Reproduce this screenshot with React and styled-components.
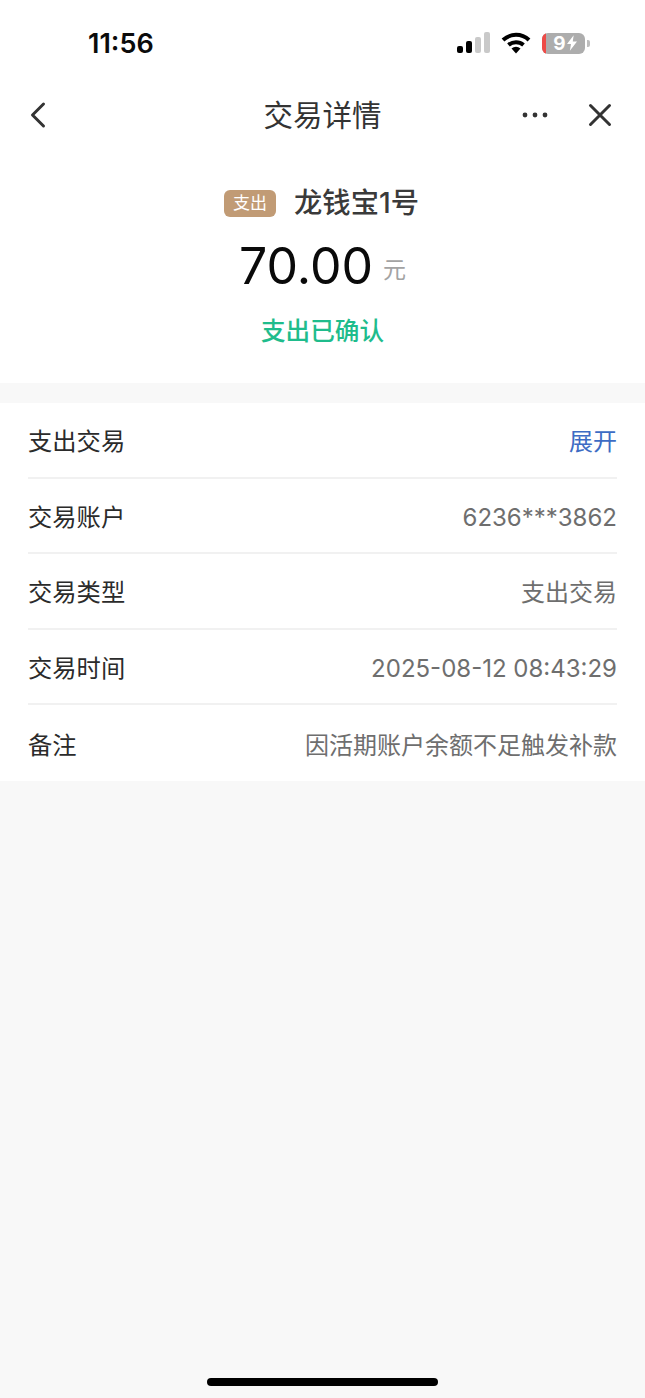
import styled, { createGlobalStyle } from "styled-components"

const GlobalStyle = createGlobalStyle`
    * {
        box-sizing: border-box;
    }
    body {
        margin: 0;
        background-color: #F8F8F8;
        font-family: "Inter", "Noto Sans CJK SC", sans-serif;
    }
`

const rows = [
    { label: "支出交易", value: "展开", link: true },
    { label: "交易账户", value: "6236***3862", digits: true },
    { label: "交易类型", value: "支出交易" },
    { label: "交易时间", value: "2025-08-12 08:43:29", digits: true },
    { label: "备注", value: "因活期账户余额不足触发补款" },
]

export default function App() {
    return (
        <Page>
            <GlobalStyle />
            <Header>
                <StatusBar>
                    <Clock>11:56</Clock>
                    <StatusIcons>
                        <svg width="33" height="22" viewBox="0 0 33 22">
                            <rect x="0" y="14" width="6" height="7" rx="2" fill="#000" />
                            <rect x="9" y="9" width="6" height="12" rx="2" fill="#000" />
                            <rect x="18" y="5" width="6" height="16" rx="2" fill="#C9C9C9" />
                            <rect x="27" y="0" width="6" height="21" rx="2" fill="#C9C9C9" />
                        </svg>
                        <svg width="30" height="22" viewBox="0 0 30 22">
                            <path d="M2 8 A19 19 0 0 1 28 8" fill="none" stroke="#000" strokeWidth="4" />
                            <path d="M7.5 13 A11.5 11.5 0 0 1 22.5 13" fill="none" stroke="#000" strokeWidth="4" />
                            <path d="M10.5 16.5 A7 7 0 0 1 19.5 16.5 L15 21.5 Z" fill="#000" />
                        </svg>
                        <Battery>
                            <BatteryBody>
                                <BatteryLevel />
                                <BatteryText>9</BatteryText>
                                <svg width="10" height="16" viewBox="0 0 9 14">
                                    <path d="M6 0 L0 8 H3.6 L2.6 14 L9 5.6 H5.2 Z" fill="#fff" />
                                </svg>
                            </BatteryBody>
                            <BatteryCap />
                        </Battery>
                    </StatusIcons>
                </StatusBar>
                <NavBar>
                    <svg width="20" height="28" viewBox="0 0 20 28">
                        <path d="M15.5 3 L4.5 14 L15.5 25" fill="none" stroke="#333" strokeWidth="3" strokeLinecap="round" strokeLinejoin="round" />
                    </svg>
                    <NavTitle>交易详情</NavTitle>
                    <NavActions>
                        <svg width="26" height="6" viewBox="0 0 26 6">
                            <circle cx="3" cy="3" r="2.4" fill="#333" />
                            <circle cx="13" cy="3" r="2.4" fill="#333" />
                            <circle cx="23" cy="3" r="2.4" fill="#333" />
                        </svg>
                        <svg width="24" height="24" viewBox="0 0 24 24">
                            <path d="M2.5 2.5 L21.5 21.5 M21.5 2.5 L2.5 21.5" fill="none" stroke="#333" strokeWidth="3" strokeLinecap="round" />
                        </svg>
                    </NavActions>
                </NavBar>
            </Header>

            <Summary>
                <ProductLine>
                    <Tag>支出</Tag>
                    <ProductName>龙钱宝1号</ProductName>
                </ProductLine>
                <AmountLine>
                    <Amount>70.00</Amount>
                    <Unit>元</Unit>
                </AmountLine>
                <Status>支出已确认</Status>
            </Summary>

            <DetailList>
                {rows.map((row) => (
                    <Row key={row.label}>
                        <Label>{row.label}</Label>
                        <Value $link={row.link} $digits={row.digits}>{row.value}</Value>
                    </Row>
                ))}
            </DetailList>

            <HomeIndicator />
        </Page>
    )
}

const Page = styled.div`
    position: relative;
    width: 645px;
    height: 1398px;
    overflow: hidden;
    background-color: #F8F8F8;
`
const Header = styled.div`
    background-color: #FFFFFF;
`
const StatusBar = styled.div`
    height: 78px;
    padding: 28px 55px 0 88px;
    display: flex;
    justify-content: space-between;
    align-items: flex-start;
`
const Clock = styled.div`
    font-size: 27px;
    line-height: 32px;
    font-weight: 600;
    color: #0B0B0B;
`
const StatusIcons = styled.div`
    display: flex;
    align-items: center;
    gap: 11px;
    height: 24px;
    margin-top: 3px;
`
const Battery = styled.div`
    display: flex;
    align-items: center;
    gap: 2px;
`
const BatteryBody = styled.div`
    position: relative;
    width: 43px;
    height: 21px;
    border-radius: 6px;
    overflow: hidden;
    background-color: #ADADAD;
    display: flex;
    align-items: center;
    justify-content: center;
    gap: 1px;
    padding-left: 3px;
`
const BatteryLevel = styled.div`
    position: absolute;
    left: 0;
    top: 0;
    bottom: 0;
    width: 4px;
    background-color: #EE4B47;
`
const BatteryText = styled.span`
    font-size: 19px;
    line-height: 21px;
    font-weight: 700;
    color: #FFFFFF;
`
const BatteryCap = styled.div`
    width: 3px;
    height: 7px;
    border-radius: 0 2px 2px 0;
    background-color: #BDBDBD;
`
const NavBar = styled.div`
    position: relative;
    height: 74px;
    padding: 0 33px 0 28px;
    display: flex;
    align-items: center;
    justify-content: space-between;
`
const NavTitle = styled.div`
    position: absolute;
    left: 0;
    right: 0;
    text-align: center;
    font-size: 29.5px;
    line-height: 40px;
    color: #333333;
`
const NavActions = styled.div`
    display: flex;
    align-items: center;
    gap: 40px;
`
const Summary = styled.div`
    height: 231px;
    padding-top: 32px;
    background-color: #FFFFFF;
    display: flex;
    flex-direction: column;
    align-items: center;
`
const ProductLine = styled.div`
    display: flex;
    align-items: center;
    gap: 18px;
    height: 38px;
    margin-right: 2px;
`
const Tag = styled.div`
    width: 52px;
    height: 27px;
    border-radius: 6px;
    background-color: #C19B75;
    color: #FFFFFF;
    font-size: 17px;
    line-height: 27px;
    text-align: center;
`
const ProductName = styled.div`
    font-size: 28.3px;
    line-height: 38px;
    font-weight: 500;
    color: #3A3A3A;
`
const AmountLine = styled.div`
    margin-top: 11px;
    display: flex;
    align-items: center;
    gap: 10px;
`
const Amount = styled.div`
    font-size: 50px;
    line-height: 66px;
    color: #0A0A0A;
`
const Unit = styled.div`
    margin-top: 4px;
    font-size: 23px;
    color: #A3A3A3;
`
const Status = styled.div`
    margin-top: 15px;
    font-size: 24.6px;
    line-height: 34px;
    font-weight: 500;
    color: #1FBC8C;
`
const DetailList = styled.div`
    margin-top: 20px;
    padding: 0 28px;
    background-color: #FFFFFF;
`
const Row = styled.div`
    height: 75.6px;
    display: flex;
    align-items: center;
    justify-content: space-between;
    border-bottom: 2px solid #F1F1F1;
    &:last-child {
        border-bottom: none;
    }
`
const Label = styled.div`
    font-size: 24.3px;
    color: #2B2B2B;
`
const Value = styled.div`
    font-size: 24px;
    margin-top: ${(props) => (props.$digits ? "4px" : "0")};
    color: ${(props) => (props.$link ? "#3D6CC4" : "#6E6E6E")};
`
const HomeIndicator = styled.div`
    position: absolute;
    left: 207px;
    bottom: 12px;
    width: 231px;
    height: 8px;
    border-radius: 4px;
    background-color: #000000;
`
